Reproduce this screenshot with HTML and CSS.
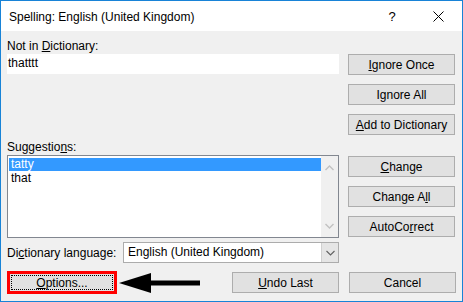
FILE: index.html
```html
<!DOCTYPE html>
<html lang="en">
<head>
    <meta charset="UTF-8">
    <title>Spelling: English (United Kingdom)</title>
    <link rel="stylesheet" href="styles.css">
</head>
<body>
    <div class="dialog">
        <div class="titlebar">
            <span class="title">Spelling: English (United Kingdom)</span>
            <span class="tb-help">?</span>
            <span class="tb-close">
                <svg width="11" height="11" viewBox="0 0 11 11"><path d="M0.5 0.5 L10.5 10.5 M10.5 0.5 L0.5 10.5" stroke="#000" stroke-width="1" fill="none"/></svg>
            </span>
        </div>

        <div class="content">
            <div class="main">
                <div class="left">
                    <div class="label">Not in <u>D</u>ictionary:</div>
                    <div class="word-field">thatttt</div>

                    <div class="label suggestions-label">Suggestio<u>n</u>s:</div>
                    <div class="listbox">
                        <div class="list-items">
                            <div class="item selected">tatty</div>
                            <div class="item">that</div>
                        </div>
                        <div class="scrollbar">
                            <svg width="9" height="6" viewBox="0 0 9 6"><path d="M0.5 5 L4.5 1 L8.5 5" stroke="#c2c2c2" stroke-width="1.4" fill="none"/></svg>
                            <svg width="9" height="6" viewBox="0 0 9 6"><path d="M0.5 1 L4.5 5 L8.5 1" stroke="#c2c2c2" stroke-width="1.4" fill="none"/></svg>
                        </div>
                    </div>

                    <div class="lang-row">
                        <span class="lang-label">Di<u>c</u>tionary language:</span>
                        <div class="combo">
                            <span class="combo-text">English (United Kingdom)</span>
                            <div class="combo-btn">
                                <svg width="9" height="6" viewBox="0 0 9 6"><path d="M0.5 1 L4.5 5 L8.5 1" stroke="#606060" stroke-width="1.1" fill="none"/></svg>
                            </div>
                        </div>
                    </div>
                </div>

                <div class="right">
                    <div class="btn-group">
                        <button class="btn"><u>I</u>gnore Once</button>
                        <button class="btn">I<u>g</u>nore All</button>
                        <button class="btn"><u>A</u>dd to Dictionary</button>
                    </div>
                    <div class="btn-group second">
                        <button class="btn"><u>C</u>hange</button>
                        <button class="btn">Change A<u>l</u>l</button>
                        <button class="btn">AutoCo<u>r</u>rect</button>
                    </div>
                </div>
            </div>

            <div class="bottom-row">
                <button class="btn options-btn"><span class="focus-ring"><u>O</u>ptions...</span></button>
                <svg class="pointer-arrow" width="82" height="22" viewBox="0 0 82 22">
                    <polygon points="0,11 32,1 32,21" fill="#000"/>
                    <rect x="30" y="8.5" width="51" height="5" fill="#000"/>
                </svg>
                <div class="spacer"></div>
                <button class="btn"><u>U</u>ndo Last</button>
                <button class="btn">Cancel</button>
            </div>
        </div>
    </div>
</body>
</html>
```

FILE: styles.css
```css
* {
    margin: 0;
    padding: 0;
    box-sizing: border-box;
}

body {
    font-family: 'Liberation Sans', Arial, sans-serif;
    font-size: 12px;
    color: #000;
    background: #fff;
}

.dialog {
    width: 463px;
    height: 302px;
    border: 1px solid #1883d7;
    background: #f0f0f0;
    display: flex;
    flex-direction: column;
}

.titlebar {
    height: 30px;
    background: #fff;
    display: flex;
    align-items: center;
    padding-left: 8px;
}

.title {
    flex: 1;
    font-size: 12px;
    padding-top: 1px;
}

.tb-help {
    width: 46px;
    text-align: center;
    font-size: 13px;
    margin-right: 0;
}

.tb-close {
    width: 46px;
    display: flex;
    justify-content: center;
    margin-right: 1px;
}

.content {
    padding: 7px 6px 0 6px;
}

.main {
    display: flex;
    gap: 9px;
}

.left {
    width: 332px;
}

.label {
    line-height: 16px;
    height: 16px;
}

.word-field {
    height: 20px;
    background: #fff;
    line-height: 18px;
    padding-left: 1px;
}

.suggestions-label {
    margin-top: 65px;
}

.listbox {
    height: 83px;
    border: 1px solid #828790;
    background: #fff;
    display: flex;
}

.list-items {
    flex: 1;
    padding: 2px 0 0 1px;
}

.item {
    height: 13px;
    line-height: 13px;
    padding-left: 2px;
}

.item + .item {
    margin-top: 1px;
}

.item.selected {
    background: #3399ff;
    color: #fff;
}

.scrollbar {
    width: 17px;
    background: #f0f0f0;
    display: flex;
    flex-direction: column;
    justify-content: space-between;
    align-items: center;
    padding: 9px 0 8px;
}

.lang-row {
    display: flex;
    align-items: center;
    margin-top: 4px;
}

.lang-label {
    width: 116px;
}

.combo {
    flex: 1;
    height: 21px;
    border: 1px solid #acacac;
    background: #fff;
    display: flex;
}

.combo-text {
    flex: 1;
    line-height: 19px;
    padding-left: 4px;
}

.combo-btn {
    width: 17px;
    background: #e5e5e5;
    border-left: 1px solid #d0d0d0;
    display: flex;
    align-items: center;
    justify-content: center;
}

.right {
    width: 107px;
    padding-top: 16px;
}

.btn-group {
    display: flex;
    flex-direction: column;
    gap: 9px;
}

.btn-group.second {
    margin-top: 21px;
}

.btn {
    width: 107px;
    height: 21px;
    border: 1px solid #adadad;
    background: #e1e1e1;
    font-family: inherit;
    font-size: 12px;
    color: #000;
    text-align: center;
}

.bottom-row {
    display: flex;
    align-items: center;
    gap: 10px;
    margin-top: 8px;
}

.options-btn {
    width: 110px;
    height: 23px;
    border: 3px solid #ff0000;
    padding: 1px;
    display: flex;
}

.focus-ring {
    flex: 1;
    border: 1px dotted #000;
    display: flex;
    align-items: center;
    justify-content: center;
}

.pointer-arrow {
    margin-left: -8px;
}

.spacer {
    flex: 1;
}
```
